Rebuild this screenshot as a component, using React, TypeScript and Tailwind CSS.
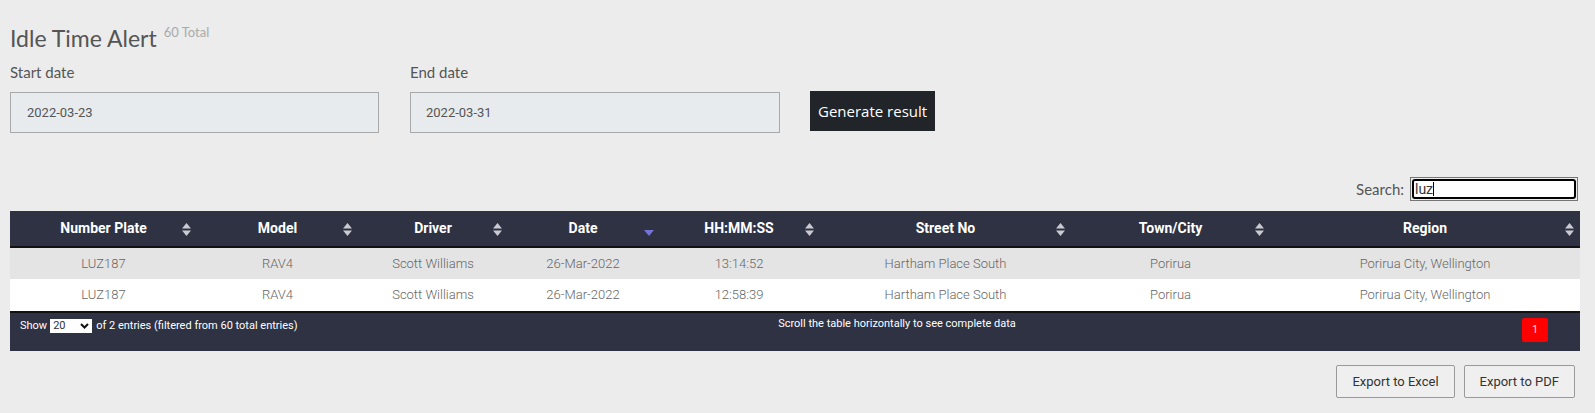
import { useState } from "react";

const columns = [
  { label: "Number Plate", w: "w-[187px]" },
  { label: "Model", w: "w-[161px]" },
  { label: "Driver", w: "w-[150px]" },
  { label: "Date", w: "w-[150px]", sorted: true },
  { label: "HH:MM:SS", w: "w-[162px]" },
  { label: "Street No", w: "w-[251px]" },
  { label: "Town/City", w: "w-[199px]" },
  { label: "Region", w: "w-[310px]" },
];

const rows = [
  ["LUZ187", "RAV4", "Scott Williams", "26-Mar-2022", "13:14:52", "Hartham Place South", "Porirua", "Porirua City, Wellington"],
  ["LUZ187", "RAV4", "Scott Williams", "26-Mar-2022", "12:58:39", "Hartham Place South", "Porirua", "Porirua City, Wellington"],
];

function SortIcon({ sorted }: { sorted?: boolean }) {
  if (sorted) {
    return (
      <svg width="10" height="6" viewBox="0 0 10 6" className="absolute right-[4px] top-[19px]">
        <path d="M0 0h10L5 6z" fill="#7474d6" />
      </svg>
    );
  }
  return (
    <svg width="9" height="13" viewBox="0 0 9 13" className="absolute right-[6px] top-[12px]">
      <path d="M4.5 0L9 5.5H0z" fill="#c9cbd2" />
      <path d="M4.5 13L9 7.5H0z" fill="#c9cbd2" />
    </svg>
  );
}

export default function App() {
  const [search] = useState("luz");

  return (
    <div className="w-[1595px] h-[413px] bg-[#ececec] px-[10px] pt-[24px] font-['Lato',sans-serif] overflow-hidden">
      <div className="flex items-start text-[#555]">
        <h1 className="text-[23px] leading-[28px] font-normal">Idle Time Alert</h1>
        <span className="ml-[7px] mt-[-1px] text-[13px] text-[#aaa]">60 Total</span>
      </div>

      <div className="flex items-start mt-[10px]">
        <div className="w-[369px]">
          <div className="text-[15px] text-[#555] leading-[20px]">Start date</div>
          <div className="mt-[10px] h-[41px] bg-[#e8ebee] border border-[#a9a9a9] flex items-center pl-[16px] text-[13px] text-[#555] font-['Roboto',sans-serif]">
            2022-03-23
          </div>
        </div>
        <div className="w-[370px] ml-[31px]">
          <div className="text-[15px] text-[#555] leading-[20px]">End date</div>
          <div className="mt-[10px] h-[41px] bg-[#e8ebee] border border-[#a9a9a9] flex items-center pl-[15px] text-[13px] text-[#555] font-['Roboto',sans-serif]">
            2022-03-31
          </div>
        </div>
        <button className="ml-[30px] mt-[29px] h-[40px] px-[8px] bg-[#212529] text-white text-[15px] font-['Open_Sans',sans-serif]">
          Generate result
        </button>
      </div>

      <div className="flex justify-end items-center mt-[44px] mr-[7px]">
        <span className="text-[15px] text-[#555] mr-[6px]">Search:</span>
        <div className="w-[168px] h-[24px] border border-[#767676] p-[1px]">
          <div className="h-full border-2 border-black rounded-[3px] bg-white flex items-center pl-[1px] text-[14px] text-[#333] font-['Roboto',sans-serif] leading-none">
            {search}
            <span className="inline-block w-px h-[14px] bg-black" />
          </div>
        </div>
      </div>

      <table className="table-fixed w-[1570px] mt-[10px] border-collapse font-['Roboto',sans-serif]">
        <colgroup>
          {columns.map((c) => (
            <col key={c.label} className={c.w} />
          ))}
        </colgroup>
        <thead>
          <tr className="bg-[#2e3243] border-b-2 border-[#111]">
            {columns.map((c) => (
              <th key={c.label} className="relative h-[36px] text-center text-white text-[14px] font-bold">
                {c.label}
                <SortIcon sorted={c.sorted} />
              </th>
            ))}
          </tr>
        </thead>
        <tbody>
          {rows.map((r, i) => (
            <tr key={i} className={i % 2 === 0 ? "bg-[#e4e4e4]" : "bg-white"}>
              {r.map((v, j) => (
                <td key={j} className="h-[32px] text-center text-[13px] font-light text-[#666]">
                  {v}
                </td>
              ))}
            </tr>
          ))}
        </tbody>
      </table>

      <div className="w-[1570px] h-[40px] bg-[#2e3243] border-t-2 border-[#111] flex items-start text-white text-[11px] font-['Roboto',sans-serif]">
        <div className="w-[701px] flex items-center pl-[10px] pt-[5px]">
          <span>Show</span>
          <div className="ml-[3px] mr-[4px] w-[42px] h-[14px] bg-white flex items-center justify-between px-[3px] text-[#333] text-[11px]">
            <span>20</span>
            <svg width="9" height="6" viewBox="0 0 9 6">
              <path d="M1 1l3.5 3.5L8 1" stroke="#111" strokeWidth="2" fill="none" />
            </svg>
          </div>
          <span>of 2 entries (filtered from 60 total entries)</span>
        </div>
        <div className="w-[372px] pt-[3px] text-center">Scroll the table horizontally to see complete data</div>
        <div className="flex-1 flex justify-end pr-[32px] pt-[5px]">
          <div className="w-[26px] h-[24px] bg-[#ff0000] rounded-[2px] text-[11px] flex items-center justify-center text-[#ffd9d9]">1</div>
        </div>
      </div>

      <div className="flex justify-end gap-[9px] mt-[14px] w-[1565px] font-['Roboto',sans-serif]">
        <button className="h-[33px] px-[15px] bg-[#efefef] border border-[#999] rounded-[2px] text-[13px] text-[#333]">Export to Excel</button>
        <button className="h-[33px] px-[15px] bg-[#efefef] border border-[#999] rounded-[2px] text-[13px] text-[#333]">Export to PDF</button>
      </div>
    </div>
  );
}
